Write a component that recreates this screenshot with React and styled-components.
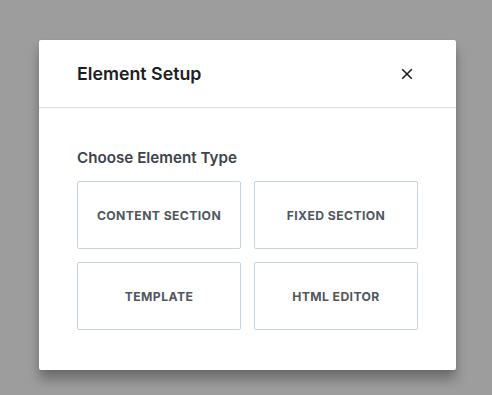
import React from "react";
import styled, { createGlobalStyle } from "styled-components";

const Global = createGlobalStyle`
  html, body { margin: 0; padding: 0; background: #9d9d9d; }
  body { font-family: Inter, "Liberation Sans", Arial, sans-serif; -webkit-font-smoothing: antialiased; }
`;

const Page = styled.div`
  width: 492px;
  height: 395px;
  padding: 40px 0 0 39px;
  box-sizing: border-box;
  overflow: hidden;
`;

const Modal = styled.div`
  width: 417px;
  height: 330px;
  background: #fff;
  border-radius: 2px;
  box-shadow: 0 10px 12px rgba(0, 0, 0, 0.28), 0 2px 4px rgba(0, 0, 0, 0.08);
  display: flex;
  flex-direction: column;
`;

const Header = styled.div`
  height: 68px;
  box-sizing: border-box;
  border-bottom: 1px solid #dcdcde;
  display: flex;
  align-items: center;
  justify-content: space-between;
  padding: 0 43px 0 38px;
`;

const Title = styled.h1`
  margin: 0;
  font-size: 17.8px;
  font-weight: 600;
  color: #1e1e1e;
  line-height: 24px;
  padding-top: 1px;
`;

const Close = styled.button`
  border: 0;
  background: none;
  padding: 0;
  width: 12px;
  height: 12px;
  display: flex;
  cursor: pointer;
`;

const Body = styled.div`
  padding: 40px 38px 0 38px;
`;

const Subtitle = styled.h2`
  margin: 0 0 13px;
  font-size: 15.2px;
  line-height: 20px;
  font-weight: 600;
  color: #3c434a;
`;

const Grid = styled.div`
  display: grid;
  grid-template-columns: 164px 164px;
  grid-auto-rows: 68px;
  column-gap: 13px;
  row-gap: 13px;
`;

const Card = styled.button`
  border: 1px solid #c5d4e0;
  border-radius: 2px;
  background: #fff;
  display: flex;
  align-items: center;
  justify-content: center;
  font-family: inherit;
  font-size: 12.2px;
  font-weight: 700;
  color: #50575e;
  text-transform: uppercase;
  letter-spacing: 0.4px;
  cursor: pointer;
  padding: 0;
`;

const items = ["Content Section", "Fixed Section", "Template", "HTML Editor"];

export default function App() {
  return (
    <>
      <Global />
      <Page>
        <Modal>
          <Header>
            <Title>Element Setup</Title>
            <Close aria-label="Close">
              <svg width="12" height="12" viewBox="0 0 12 12">
                <path d="M1.2 1.2 L10.8 10.8 M10.8 1.2 L1.2 10.8" stroke="#1e1e1e" strokeWidth="1.6" />
              </svg>
            </Close>
          </Header>
          <Body>
            <Subtitle>Choose Element Type</Subtitle>
            <Grid>
              {items.map((t) => (
                <Card key={t}>{t}</Card>
              ))}
            </Grid>
          </Body>
        </Modal>
      </Page>
    </>
  );
}
